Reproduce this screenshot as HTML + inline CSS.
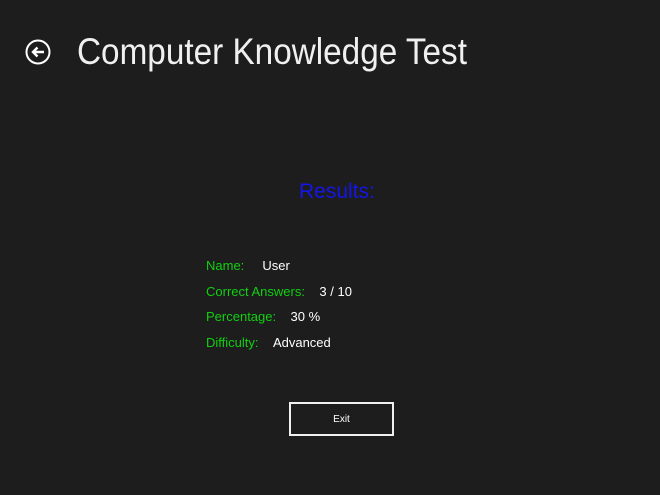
<!DOCTYPE html>
<html><head><meta charset="utf-8"><style>
body{margin:0;width:660px;height:495px;background:#1d1d1d;overflow:hidden;font-family:"Liberation Sans",sans-serif;position:relative;color:#fff}
.t{position:absolute;left:77px;top:31px;font-size:37px;color:#f0f0f0;white-space:nowrap;transform:scaleX(0.9);transform-origin:0 0}
.back{position:absolute;left:25px;top:39px;width:26px;height:26px}
.res{position:absolute;left:299px;top:180px;font-size:21px;color:#1515e8}
.row{position:absolute;left:206px;font-size:13px;white-space:nowrap}
.g{color:#10d010}
.btn{position:absolute;left:289px;top:402px;width:101px;height:30px;border:2px solid #f0f0f0;text-align:center;line-height:32px;font-size:10px}
</style></head><body>
<svg class="back" viewBox="0 0 26 26"><circle cx="13" cy="13" r="11.5" fill="none" stroke="#fff" stroke-width="2"/><path d="M19 13H8M12.5 8.5L8 13l4.5 4.5" fill="none" stroke="#fff" stroke-width="2.4"/></svg>
<div class="t">Computer Knowledge Test</div>
<div class="res">Results:</div>
<div class="row" style="top:258px"><span class="g">Name:</span>&nbsp;&nbsp;&nbsp;&nbsp;&nbsp;User</div>
<div class="row" style="top:284px"><span class="g">Correct Answers:</span>&nbsp;&nbsp;&nbsp;&nbsp;3 / 10</div>
<div class="row" style="top:309px"><span class="g">Percentage:</span>&nbsp;&nbsp;&nbsp;&nbsp;30 %</div>
<div class="row" style="top:335px"><span class="g">Difficulty:</span>&nbsp;&nbsp;&nbsp;&nbsp;Advanced</div>
<div class="btn">Exit</div>
</body></html>
